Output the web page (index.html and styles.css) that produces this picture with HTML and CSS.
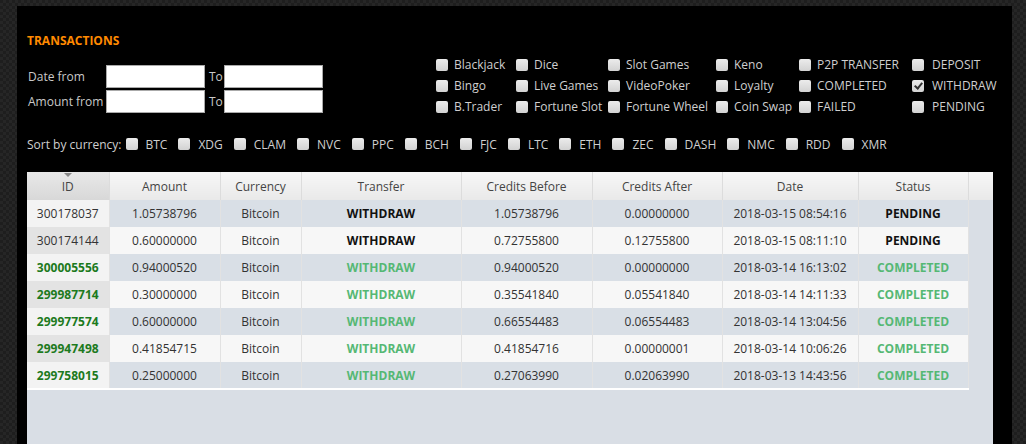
FILE: index.html
```html
<!DOCTYPE html>
<html lang="en">
<head>
  <meta charset="UTF-8">
  <meta name="viewport" content="width=device-width, initial-scale=1.0">
  <title>Transactions</title>
  <link rel="stylesheet" href="styles.css">
</head>
<body>
  <div class="panel">
    <h2 class="title">TRANSACTIONS</h2>

    <div class="filters">
      <div class="range-form">
        <label>Date from</label>
        <input type="text">
        <span>To</span>
        <input type="text">
        <label>Amount from</label>
        <input type="text">
        <span>To</span>
        <input type="text">
      </div>

      <div class="types">
        <label class="chk"><input type="checkbox">Blackjack</label>
        <label class="chk"><input type="checkbox">Dice</label>
        <label class="chk"><input type="checkbox">Slot Games</label>
        <label class="chk"><input type="checkbox">Keno</label>
        <label class="chk"><input type="checkbox">P2P TRANSFER</label>
        <label class="chk wide"><input type="checkbox">DEPOSIT</label>

        <label class="chk"><input type="checkbox">Bingo</label>
        <label class="chk"><input type="checkbox">Live Games</label>
        <label class="chk"><input type="checkbox">VideoPoker</label>
        <label class="chk"><input type="checkbox">Loyalty</label>
        <label class="chk"><input type="checkbox">COMPLETED</label>
        <label class="chk wide"><input type="checkbox" checked>WITHDRAW</label>

        <label class="chk"><input type="checkbox">B.Trader</label>
        <label class="chk"><input type="checkbox">Fortune Slot</label>
        <label class="chk"><input type="checkbox">Fortune Wheel</label>
        <label class="chk"><input type="checkbox">Coin Swap</label>
        <label class="chk"><input type="checkbox">FAILED</label>
        <label class="chk wide"><input type="checkbox">PENDING</label>
      </div>
    </div>

    <div class="currencies">
      <span class="sort-label">Sort by currency:</span>
      <label class="cur"><input type="checkbox">BTC</label>
      <label class="cur"><input type="checkbox">XDG</label>
      <label class="cur"><input type="checkbox">CLAM</label>
      <label class="cur"><input type="checkbox">NVC</label>
      <label class="cur"><input type="checkbox">PPC</label>
      <label class="cur"><input type="checkbox">BCH</label>
      <label class="cur"><input type="checkbox">FJC</label>
      <label class="cur"><input type="checkbox">LTC</label>
      <label class="cur"><input type="checkbox">ETH</label>
      <label class="cur"><input type="checkbox">ZEC</label>
      <label class="cur"><input type="checkbox">DASH</label>
      <label class="cur"><input type="checkbox">NMC</label>
      <label class="cur"><input type="checkbox">RDD</label>
      <label class="cur"><input type="checkbox">XMR</label>
    </div>

    <div class="grid">
      <table class="grid-head">
        <tr>
          <th class="c-id sorted">ID</th>
          <th class="c-amount">Amount</th>
          <th class="c-cur">Currency</th>
          <th class="c-transfer">Transfer</th>
          <th class="c-before">Credits Before</th>
          <th class="c-after">Credits After</th>
          <th class="c-date">Date</th>
          <th class="c-status">Status</th>
          <th class="c-scroll"></th>
        </tr>
      </table>
      <table class="grid-body">
        <tr class="pending">
          <td class="c-id">300178037</td>
          <td class="c-amount">1.05738796</td>
          <td class="c-cur">Bitcoin</td>
          <td class="c-transfer tag">WITHDRAW</td>
          <td class="c-before">1.05738796</td>
          <td class="c-after">0.00000000</td>
          <td class="c-date">2018-03-15 08:54:16</td>
          <td class="c-status tag">PENDING</td>
        </tr>
        <tr class="pending">
          <td class="c-id">300174144</td>
          <td class="c-amount">0.60000000</td>
          <td class="c-cur">Bitcoin</td>
          <td class="c-transfer tag">WITHDRAW</td>
          <td class="c-before">0.72755800</td>
          <td class="c-after">0.12755800</td>
          <td class="c-date">2018-03-15 08:11:10</td>
          <td class="c-status tag">PENDING</td>
        </tr>
        <tr class="done">
          <td class="c-id">300005556</td>
          <td class="c-amount">0.94000520</td>
          <td class="c-cur">Bitcoin</td>
          <td class="c-transfer tag">WITHDRAW</td>
          <td class="c-before">0.94000520</td>
          <td class="c-after">0.00000000</td>
          <td class="c-date">2018-03-14 16:13:02</td>
          <td class="c-status tag">COMPLETED</td>
        </tr>
        <tr class="done">
          <td class="c-id">299987714</td>
          <td class="c-amount">0.30000000</td>
          <td class="c-cur">Bitcoin</td>
          <td class="c-transfer tag">WITHDRAW</td>
          <td class="c-before">0.35541840</td>
          <td class="c-after">0.05541840</td>
          <td class="c-date">2018-03-14 14:11:33</td>
          <td class="c-status tag">COMPLETED</td>
        </tr>
        <tr class="done">
          <td class="c-id">299977574</td>
          <td class="c-amount">0.60000000</td>
          <td class="c-cur">Bitcoin</td>
          <td class="c-transfer tag">WITHDRAW</td>
          <td class="c-before">0.66554483</td>
          <td class="c-after">0.06554483</td>
          <td class="c-date">2018-03-14 13:04:56</td>
          <td class="c-status tag">COMPLETED</td>
        </tr>
        <tr class="done">
          <td class="c-id">299947498</td>
          <td class="c-amount">0.41854715</td>
          <td class="c-cur">Bitcoin</td>
          <td class="c-transfer tag">WITHDRAW</td>
          <td class="c-before">0.41854716</td>
          <td class="c-after">0.00000001</td>
          <td class="c-date">2018-03-14 10:06:26</td>
          <td class="c-status tag">COMPLETED</td>
        </tr>
        <tr class="done">
          <td class="c-id">299758015</td>
          <td class="c-amount">0.25000000</td>
          <td class="c-cur">Bitcoin</td>
          <td class="c-transfer tag">WITHDRAW</td>
          <td class="c-before">0.27063990</td>
          <td class="c-after">0.02063990</td>
          <td class="c-date">2018-03-13 14:43:56</td>
          <td class="c-status tag">COMPLETED</td>
        </tr>
      </table>
    </div>
  </div>
</body>
</html>
```

FILE: styles.css
```css
html, body {
  height: 100%;
}
body {
  margin: 0;
  font-family: "Open Sans", Arial, sans-serif;
  font-size: 12px;
  background-color: #1e1e1e;
  background-image:
    linear-gradient(45deg, #262626 25%, transparent 25%, transparent 75%, #262626 75%),
    linear-gradient(45deg, #262626 25%, transparent 25%, transparent 75%, #262626 75%);
  background-size: 6px 6px;
  background-position: 0 0, 3px 3px;
  overflow: hidden;
}
.panel {
  display: flex;
  flex-direction: column;
  margin: 6px 0 0 17px;
  width: 995px;
  height: calc(100% - 6px);
  background: #000;
  padding: 0 0 0 10px;
  box-sizing: border-box;
}
.title {
  margin: 0;
  padding-top: 26px;
  font-size: 12px;
  line-height: 17px;
  font-weight: bold;
  color: #ff8a00;
}
.filters {
  display: flex;
  margin-top: 5px;
}
.range-form {
  display: grid;
  grid-template-columns: 79px 101px 17px 101px;
  grid-auto-rows: 23px;
  row-gap: 2px;
  align-items: center;
  margin-top: 11px;
  width: 409px;
  color: #c9c9c9;
}
.range-form label {
  padding-left: 1px;
}
.range-form span {
  padding-left: 2px;
}
.range-form input {
  width: 99px;
  height: 23px;
  box-sizing: border-box;
  border: 1px solid #aaa;
  background: #fff;
  margin: 0;
}
.types {
  display: grid;
  grid-template-columns: 80px 92px 108px 83px 113px 90px;
  grid-auto-rows: 21px;
  color: #cfcfcf;
}
.chk {
  display: flex;
  align-items: center;
  white-space: nowrap;
}
.chk.wide input {
  margin-right: 8px;
}
input[type="checkbox"] {
  appearance: none;
  -webkit-appearance: none;
  width: 12px;
  height: 12px;
  margin: 0 6px 0 0;
  border-radius: 2px;
  background: linear-gradient(#ececec, #d2d2d2);
  position: relative;
  flex: none;
}
input[type="checkbox"]:checked::after {
  content: "";
  position: absolute;
  left: 4px;
  top: 1px;
  width: 3px;
  height: 6px;
  border: solid #333;
  border-width: 0 2px 2px 0;
  transform: rotate(40deg);
}
.currencies {
  display: flex;
  align-items: center;
  margin-top: 18px;
  height: 18px;
  color: #cfcfcf;
}
.sort-label {
  margin-right: 4px;
}
.cur {
  display: flex;
  align-items: center;
  margin-right: 11px;
}
.cur input[type="checkbox"] {
  margin-right: 8px;
}
.grid {
  flex: 1;
  margin-top: 19px;
  width: 966px;
  background: #d9dee5;
}
.grid table {
  border-collapse: collapse;
  table-layout: fixed;
}
.grid-head {
  width: 966px;
}
.grid-body {
  width: 941px;
}
.grid th,
.grid td {
  box-sizing: border-box;
}
.grid th {
  height: 28px;
  padding: 0;
  font-weight: normal;
  color: #444;
  background: linear-gradient(#f7f7f7, #e9e9e9);
  border-right: 1px solid #dcdcdc;
  text-align: center;
}
.grid th.sorted {
  background: linear-gradient(#e8e8e8, #d8d8d8);
  position: relative;
}
.grid th.sorted::before {
  content: "";
  position: absolute;
  top: 1px;
  left: 37px;
  border-left: 4px solid transparent;
  border-right: 4px solid transparent;
  border-top: 4px solid #888;
}
.grid td {
  height: 27px;
  padding: 0;
  text-align: center;
  color: #333;
  border-right: 1px solid #e2e2e2;
  background: #d9dfe6;
}
.grid tr:nth-child(even) td {
  background: #f7f7f7;
}
.grid td.c-id {
  background: #f3f3f3;
}
.grid tr:nth-child(even) td.c-id {
  background: #e3e3e3;
}
.grid tr:last-child td {
  border-bottom: 2px solid #fff;
}
.c-id { width: 82px; }
.c-amount { width: 111px; }
.c-cur { width: 81px; }
.c-transfer { width: 160px; }
.c-before { width: 131px; }
.c-after { width: 130px; }
.c-date { width: 136px; }
.c-status { width: 110px; }
.c-scroll { width: 25px; }
.grid th.c-scroll {
  border-right: none;
}
.pending .tag {
  font-weight: bold;
  color: #111;
}
.done .tag {
  font-weight: bold;
  color: #55b874;
}
.done .c-id {
  font-weight: bold;
  color: #1d7a1d;
}
```
